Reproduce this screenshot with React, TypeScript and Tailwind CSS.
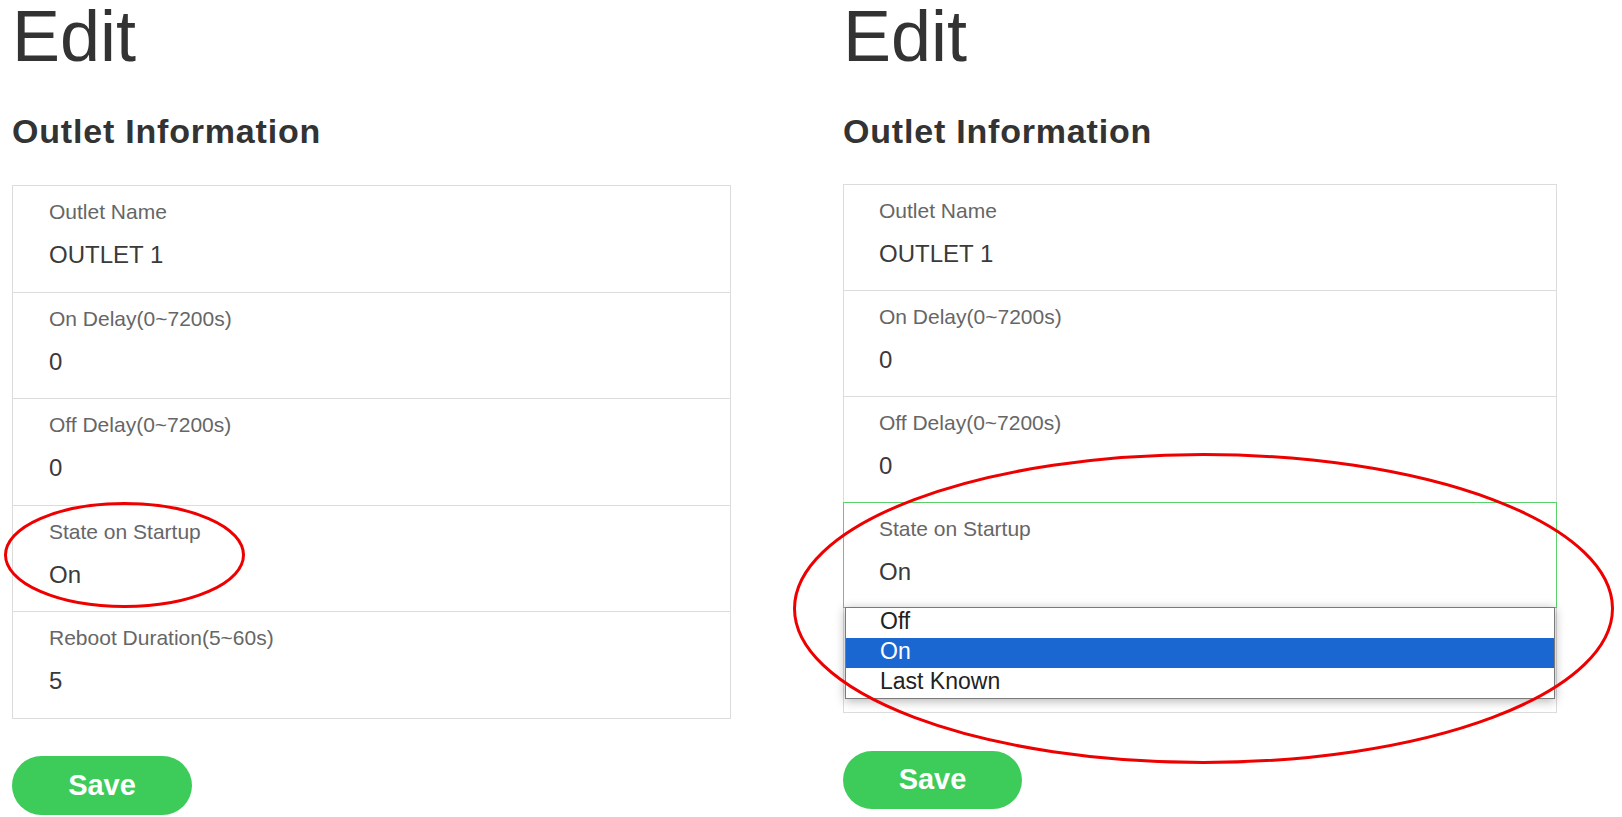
import React from 'react';

type Field = { label: string; value: string };

const fields: Field[] = [
  { label: 'Outlet Name', value: 'OUTLET 1' },
  { label: 'On Delay(0~7200s)', value: '0' },
  { label: 'Off Delay(0~7200s)', value: '0' },
  { label: 'State on Startup', value: 'On' },
  { label: 'Reboot Duration(5~60s)', value: '5' },
];

const font = { fontFamily: '"Liberation Sans", Arial, sans-serif' };

const FieldText = ({ field }: { field: Field }) => (
  <>
    <div className="text-[21px] leading-[24px] text-[#666]">{field.label}</div>
    <div className="mt-[17px] text-[24px] leading-[28px] text-[#3a3a3a]">{field.value}</div>
  </>
);

const Header = () => (
  <>
    <h1 className="text-[72px] leading-[72px] text-[#333] font-normal">Edit</h1>
    <h2 className="mt-[40px] text-[34px] leading-[39px] font-bold tracking-[0.8px] text-[#333]">
      Outlet Information
    </h2>
  </>
);

const SaveButton = ({ className }: { className: string }) => (
  <button
    className={`${className} rounded-full bg-[#3dcb5a] text-white text-[29px] font-bold flex items-center justify-center`}
  >
    Save
  </button>
);

// left screenshot: plain form
const LeftPanel = () => {
  const heights = ['h-[107px]', 'h-[106px]', 'h-[107px]', 'h-[106px]', 'h-[108px]'];
  return (
    <div className="w-[719px] flex flex-col">
      <Header />
      <div className="mt-[34px] flex flex-col">
        {fields.map((f, i) => (
          <div
            key={i}
            className={`${heights[i]} border-x border-t border-[#dcdcdc] ${i === fields.length - 1 ? 'border-b' : ''} pl-[36px] pt-[14px]`}
          >
            <FieldText field={f} />
          </div>
        ))}
      </div>
      <SaveButton className="mt-[37px] w-[180px] h-[59px]" />
    </div>
  );
};

const options = ['Off', 'On', 'Last Known'];

// right screenshot: startup state select opened
const RightPanel = () => (
  <div className="w-[714px] flex flex-col">
    <Header />
    <div className="mt-[33px] flex flex-col">
      {fields.map((f, i) => {
        if (i === 3) {
          return (
            <div key={i} className="relative h-[106px] border border-[#5ad26a] pl-[35px] pt-[14px]">
              <FieldText field={f} />
              <div className="absolute top-full left-[1px] right-[1px] z-10 border border-[#7a7a7a] bg-white shadow-[0_2px_10px_rgba(0,0,0,0.3)]">
                {options.map((o) => (
                  <div
                    key={o}
                    className={`h-[30px] pl-[34px] text-[23px] leading-[26px] ${o === 'On' ? 'bg-[#1a67d2] text-white' : 'text-[#222]'}`}
                  >
                    {o}
                  </div>
                ))}
              </div>
            </div>
          );
        }
        return (
          <div
            key={i}
            className={`${i === 4 ? 'h-[105px] border-b' : 'h-[106px] border-t'} border-x border-[#dcdcdc] pl-[35px] ${i === 4 ? 'pt-[15px]' : 'pt-[14px]'}`}
          >
            <FieldText field={f} />
          </div>
        );
      })}
    </div>
    <SaveButton className="mt-[38px] w-[179px] h-[58px]" />
  </div>
);

export default function App() {
  return (
    <div className="relative w-full h-[817px] bg-white overflow-hidden" style={font}>
      <div className="flex pl-[12px]">
        <LeftPanel />
        <div className="ml-[112px]">
          <RightPanel />
        </div>
      </div>
      {/* red annotation rings */}
      <svg className="absolute inset-0 pointer-events-none z-20" width="1622" height="817">
        <ellipse cx="124.5" cy="555" rx="119" ry="51.5" fill="none" stroke="#ee0000" strokeWidth="3" />
        <ellipse cx="1203.5" cy="608.5" rx="409" ry="154" fill="none" stroke="#ee0000" strokeWidth="3" />
      </svg>
    </div>
  );
}
